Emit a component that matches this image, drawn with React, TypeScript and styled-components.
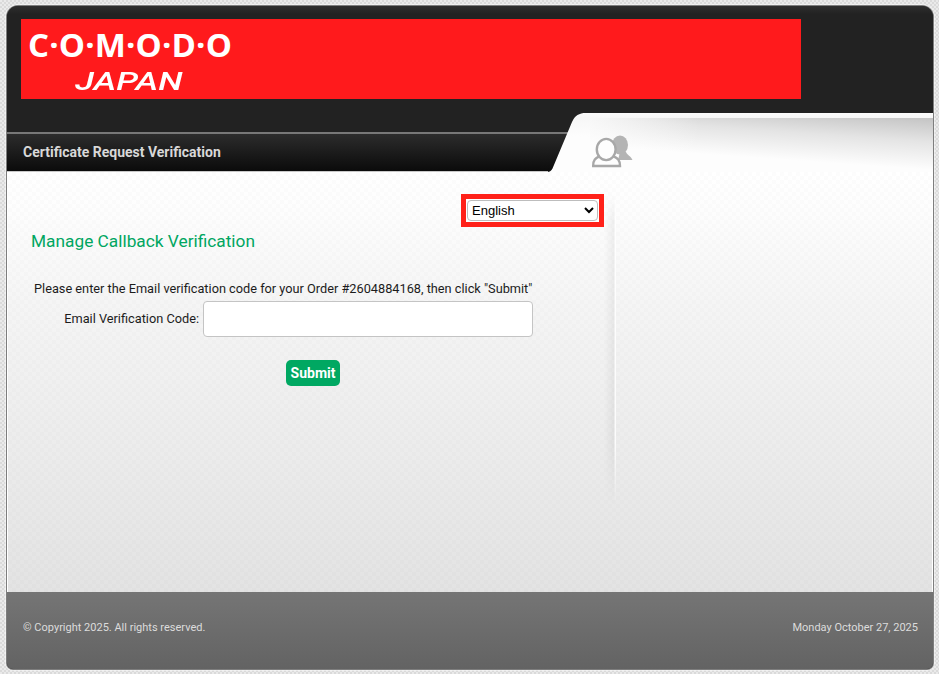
import React from "react";
import styled, { createGlobalStyle } from "styled-components";

const Global = createGlobalStyle`
  html, body { margin: 0; padding: 0; }
  body {
    width: 939px; height: 674px; overflow: hidden;
    font-family: Roboto, "Liberation Sans", sans-serif;
    background-color: #e2e2e2;
    background-image: repeating-conic-gradient(#dadada 0 25%, #eaeaea 0 50%);
    background-size: 4px 4px;
  }
`;
const Page = styled.div`
  padding: 6px 6px 5px 7px;
  width: 926px; height: 663px;
`;
const Card = styled.div`
  width: 926px; height: 663px;
  display: flex; flex-direction: column;
  border-radius: 11px 11px 6px 6px;
  overflow: hidden;
  background: #222;
  box-shadow: 0 0 0 1px #7d7d7d, 0 0 0 2px rgba(255,255,255,.45);
`;
const Masthead = styled.header`
  height: 107px; flex: none;
  padding: 13px 0 0 14px;
  box-sizing: border-box;
  background: linear-gradient(#2e2e2e 0, #222 8px);
`;
const Banner = styled.div`
  width: 780px; height: 80px;
  background: #ff1a1c;
  color: #fff;
  box-sizing: border-box;
  padding: 6px 0 0 7px;
  overflow: hidden;
`;
const LogoWord = styled.div`
  font-family: "Open Sans", sans-serif;
  font-weight: 700;
  font-size: 33px;
  line-height: 40px;
  letter-spacing: 0.15px;
  white-space: nowrap;
`;
const LogoSub = styled.div`
  font-family: Roboto, sans-serif;
  font-style: italic;
  font-weight: 500;
  font-size: 26.5px;
  line-height: 28px;
  margin: 2px 0 0 47px;
  width: 90px;
  white-space: nowrap;
  transform: scaleX(1.33);
  transform-origin: left center;
`;
const Band = styled.div`
  height: 59px; flex: none;
  display: flex;
`;
const TabSide = styled.div`
  width: 533px; flex: none;
  display: flex; flex-direction: column;
  justify-content: flex-end;
`;
const TitleBar = styled.div`
  height: 40px;
  box-sizing: border-box;
  padding: 0 0 2px 16px;
  display: flex; align-items: center;
  border-top: 2px solid #787878;
  border-bottom: 1px solid #c8c8c8;
  background: linear-gradient(#2c2c2c, #0b0b0b);
  color: #d8d8d8;
  font-weight: 700;
  font-size: 14px;
`;
const Wedge = styled.svg`
  width: 50px; height: 59px; flex: none; display: block;
`;
const Gloss = styled.div`
  flex: 1;
  position: relative;
  background:
    linear-gradient(#fbfbfb, #f7f7f7) 0 0 / 100% 5px no-repeat,
    linear-gradient(90deg, rgba(253,253,253,.75) 0, rgba(253,253,253,0) 32%) 0 5px no-repeat,
    linear-gradient(184deg, #c4c4c4 0, #e4e4e4 24px, #fdfdfd 52px) 0 5px no-repeat,
    #fdfdfd;
`;
const PeopleIcon = styled.svg`
  position: absolute; left: 0; top: 21px;
  width: 44px; height: 34px;
`;
const Body = styled.main`
  flex: 1;
  display: flex;
  background:
    repeating-conic-gradient(rgba(0,0,0,.01) 0 25%, transparent 0 50%) 0 0 / 8px 8px,
    linear-gradient(#ffffff 0, #fdfdfd 40px, #f5f5f5 130px, #e3e3e3 420px);
  border-left: 1px solid #fff;
  border-right: 1px solid #fff;
`;
const Left = styled.section`
  width: 596px; flex: none;
  padding-top: 22px;
`;
const Divider = styled.div`
  width: 12px; flex: none;
  height: 312px; margin-top: 22px;
  background: linear-gradient(90deg, transparent, rgba(0,0,0,.05) 10px, rgba(255,255,255,.8) 11px, rgba(255,255,255,.8) 100%);
  mask-image: linear-gradient(transparent, #000 26px, #000 80%, transparent);
`;
const LangRow = styled.div`
  display: flex; justify-content: flex-end;
`;
const LangBox = styled.div`
  width: 143px; height: 33px;
  box-sizing: border-box;
  border: 5px solid #ff2119;
  background: #fff;
  display: flex; align-items: center; justify-content: center;
`;
const LangSelect = styled.select`
  width: 131px; height: 21px;
  box-sizing: border-box;
  font: 13px/1 "Liberation Sans", Arial, sans-serif;
  color: #000;
  background: #fff;
  border: 1px solid #bdbdbd;
  border-radius: 4px;
  padding: 0;
`;
const Heading = styled.h1`
  margin: 3px 0 0 23px;
  font-size: 17.3px;
  line-height: 22px;
  font-weight: 400;
  color: #00a661;
`;
const Form = styled.form`
  margin: 29px 0 0 26px;
  width: 499px;
  color: #1c1c1c;
`;
const Prompt = styled.p`
  margin: 0;
  line-height: 16px;
  font-size: 12.75px;
  white-space: nowrap;
`;
const Field = styled.div`
  margin-top: 4px;
  display: flex; align-items: center; justify-content: flex-end;
  gap: 4px;
`;
const Label = styled.label`
  font-size: 12.75px;
  line-height: 16px;
`;
const TextInput = styled.input`
  width: 330px; height: 36px;
  box-sizing: border-box;
  border: 1px solid #c4c4c4;
  border-radius: 4px;
  background: #fff;
`;
const SubmitRow = styled.div`
  margin-top: 23px;
  padding-left: 252px;
`;
const Submit = styled.button`
  width: 54px; height: 26px;
  padding: 0;
  border: 0;
  border-radius: 5px;
  background: #00a862;
  color: #fff;
  font: 700 14px Roboto, sans-serif;
`;
const Footer = styled.footer`
  height: 77px; flex: none;
  box-sizing: border-box;
  padding: 0 15px 6px 16px;
  display: flex; align-items: center; justify-content: space-between;
  background: linear-gradient(#757575, #636363);
  color: #dcdcdc;
  font-size: 11px;
`;

export default function App() {
  return (
    <>
      <Global />
      <Page>
        <Card>
          <Masthead>
            <Banner>
              <LogoWord>C·O·M·O·D·O</LogoWord>
              <LogoSub>JAPAN</LogoSub>
            </Banner>
          </Masthead>
          <Band>
            <TabSide>
              <TitleBar>Certificate Request Verification</TitleBar>
            </TabSide>
            <Wedge viewBox="0 0 50 59">
              <defs>
                <linearGradient id="tabFill" x1="0" y1="19" x2="0" y2="59" gradientUnits="userSpaceOnUse">
                  <stop offset="0" stopColor="#2c2c2c" />
                  <stop offset="1" stopColor="#0b0b0b" />
                </linearGradient>
                <linearGradient id="wedgeFill" x1="0" y1="0" x2="0" y2="59" gradientUnits="userSpaceOnUse">
                  <stop offset="0" stopColor="#fbfbfb" />
                  <stop offset="0.085" stopColor="#f7f7f7" />
                  <stop offset="0.4" stopColor="#fdfdfd" />
                </linearGradient>
              </defs>
              <rect width="50" height="59" fill="#222" />
              <rect y="19" width="40" height="40" fill="url(#tabFill)" />
              <rect y="19" width="40" height="2" fill="#787878" />
              <rect y="58" width="8" height="1" fill="#c8c8c8" />
              <path d="M0 59 H5 C9 59 11 58.5 12.5 55.5 L32 9 C35 2.5 39 0 46 0 H50 V59 Z" fill="url(#wedgeFill)" />
            </Wedge>
            <Gloss>
              <PeopleIcon viewBox="0 0 44 34">
                <ellipse cx="30" cy="11" rx="8" ry="9.5" fill="#b4b4b4" />
                <path d="M30 18 L36 18 C37 21 41 22 42.5 26 L28 26 Z" fill="#b4b4b4" />
                <path d="M10 22 C6 24 3 25 3.2 32 H30 C30 25 27 24 23 22 Z" fill="#fdfdfd" stroke="#a8a8a8" strokeWidth="2.4" />
                <ellipse cx="16.2" cy="15.5" rx="9.4" ry="10.6" fill="#fdfdfd" stroke="#a8a8a8" strokeWidth="2.4" />
              </PeopleIcon>
            </Gloss>
          </Band>
          <Body>
            <Left>
              <LangRow>
                <LangBox>
                  <LangSelect defaultValue="English">
                    <option>English</option>
                  </LangSelect>
                </LangBox>
              </LangRow>
              <Heading>Manage Callback Verification</Heading>
              <Form>
                <Prompt>Please enter the Email verification code for your Order #2604884168, then click "Submit"</Prompt>
                <Field>
                  <Label>Email Verification Code:</Label>
                  <TextInput />
                </Field>
                <SubmitRow>
                  <Submit type="button">Submit</Submit>
                </SubmitRow>
              </Form>
            </Left>
            <Divider />
          </Body>
          <Footer>
            <span>© Copyright 2025. All rights reserved.</span>
            <span>Monday October 27, 2025</span>
          </Footer>
        </Card>
      </Page>
    </>
  );
}
